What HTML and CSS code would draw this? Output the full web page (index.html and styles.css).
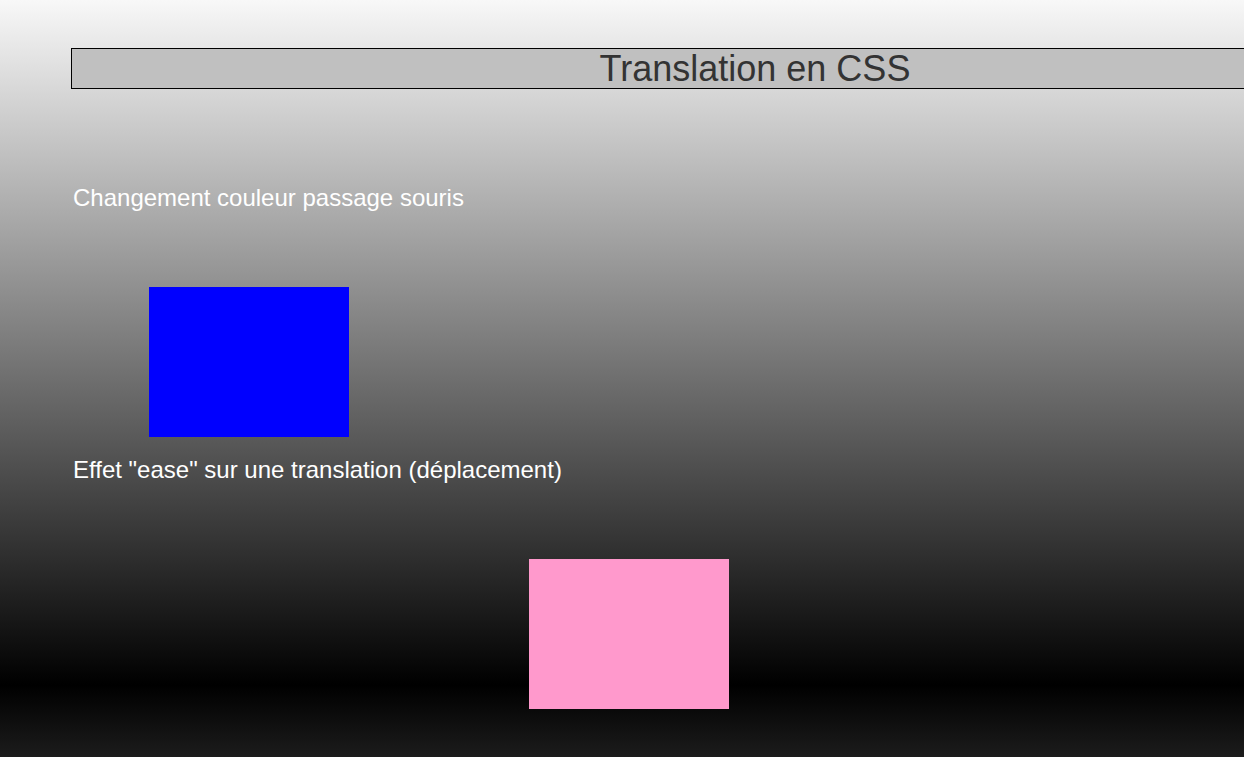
FILE: index.html
```html
<!DOCTYPE html>
<html lang="fr">
<head>
<meta charset="utf-8">
<title>Translation en CSS</title>
<link rel="stylesheet" href="styles.css">
</head>
<body>
<div class="page">
  <h1 class="title">Translation en CSS</h1>
  <p class="label label-first">Changement couleur passage souris</p>
  <div class="box box-blue"></div>
  <p class="label label-second">Effet "ease" sur une translation (déplacement)</p>
  <div class="box box-pink"></div>
</div>
</body>
</html>
```
FILE: styles.css
```css
html {
  height: 100%;
  background: linear-gradient(to bottom, #f8f8f8 0px, #000000 685px, #1c1c1c 757px);
  background-repeat: no-repeat;
  background-color: #1c1c1c;
}
body {
  margin: 0;
  height: 757px;
  overflow: hidden;
  font-family: "Liberation Sans", Arial, sans-serif;
}
.page {
  padding: 48px 0 0 71px;
}
.title {
  margin: 0;
  width: 1368px;
  box-sizing: border-box;
  height: 41px;
  padding-top: 1px;
  border: 1px solid #000;
  background: #c0c0c0;
  color: #333333;
  font-weight: normal;
  font-size: 36px;
  line-height: 38px;
  text-align: center;
}
.label {
  margin: 0;
  color: #ffffff;
  font-size: 24px;
  line-height: 28px;
  padding-left: 2px;
}
.label-first {
  margin-top: 95px;
}
.box {
  width: 200px;
  height: 150px;
}
.box-blue {
  background: #0000ff;
  margin: 75px 0 0 78px;
}
.label-second {
  margin-top: 19px;
}
.box-pink {
  background: #ff99cc;
  margin: 75px 0 0 458px;
}
```
